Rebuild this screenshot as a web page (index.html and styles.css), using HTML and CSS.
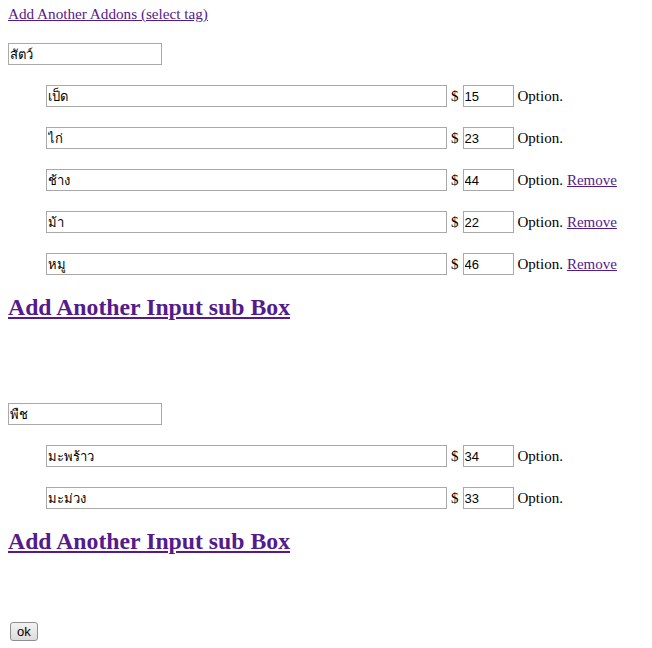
FILE: index.html
```html
<!DOCTYPE html>
<html lang="th">
<head>
  <meta charset="UTF-8" />
  <title>Addons</title>
  <link rel="stylesheet" href="styles.css">
</head>
<body>

<a href="#" class="add-tag">Add Another Addons (select tag)</a>

<form id="addons-form">
  <div class="group">
    <input type="text" class="tag-name" value="สัตว์">
    <div class="items">
      <div class="item">
        <input type="text" class="item-name" value="เป็ด">
        <span>$</span>
        <input type="text" class="item-price" value="15">
        <span>Option.</span>
      </div>
      <div class="item">
        <input type="text" class="item-name" value="ไก่">
        <span>$</span>
        <input type="text" class="item-price" value="23">
        <span>Option.</span>
      </div>
      <div class="item">
        <input type="text" class="item-name" value="ช้าง">
        <span>$</span>
        <input type="text" class="item-price" value="44">
        <span>Option.</span>
        <a href="#" class="remove">Remove</a>
      </div>
      <div class="item">
        <input type="text" class="item-name" value="ม้า">
        <span>$</span>
        <input type="text" class="item-price" value="22">
        <span>Option.</span>
        <a href="#" class="remove">Remove</a>
      </div>
      <div class="item">
        <input type="text" class="item-name" value="หมู">
        <span>$</span>
        <input type="text" class="item-price" value="46">
        <span>Option.</span>
        <a href="#" class="remove">Remove</a>
      </div>
    </div>
    <h2><a href="#">Add Another Input sub Box</a></h2>
  </div>

  <div class="group">
    <input type="text" class="tag-name" value="พืช">
    <div class="items">
      <div class="item">
        <input type="text" class="item-name" value="มะพร้าว">
        <span>$</span>
        <input type="text" class="item-price" value="34">
        <span>Option.</span>
      </div>
      <div class="item">
        <input type="text" class="item-name" value="มะม่วง">
        <span>$</span>
        <input type="text" class="item-price" value="33">
        <span>Option.</span>
      </div>
    </div>
    <h2><a href="#">Add Another Input sub Box</a></h2>
  </div>

  <button type="submit" class="ok">ok</button>
</form>

</body>
</html>
```

FILE: styles.css
```css
body {
  margin: 5px 8px 8px;
  font-family: "Liberation Serif", "Times New Roman", serif;
  font-size: 15px;
  color: #000;
  background: #fff;
}
a {
  color: #551a8b;
}
.add-tag {
  display: block;
  line-height: 18px;
  font-size: 15.2px;
}
.group {
  display: flex;
  flex-direction: column;
  align-items: flex-start;
}
.group + .group .tag-name {
  margin-top: 82px;
}
input {
  box-sizing: border-box;
  height: 22px;
  padding: 0 1px;
  border: 1px solid #a9a9a9;
  font-family: Tahoma, "Liberation Sans", sans-serif;
  font-size: 13px;
  color: #000;
}
.tag-name {
  width: 154px;
  margin-top: 20px;
}
.items {
  padding-left: 38px;
}
.item {
  display: flex;
  align-items: center;
  gap: 4px;
  margin-top: 20px;
  line-height: 22px;
}
.item-name {
  width: 401px;
}
.item-price {
  width: 51px;
}
h2 {
  margin: 19px 0 0;
  font-size: 23.75px;
  line-height: 27px;
}
.ok {
  margin: 67px 0 0 2px;
  height: 19px;
  padding: 0 6px;
  font-family: Tahoma, "Liberation Sans", sans-serif;
  font-size: 13px;
  border: 1px solid #8e8f8f;
  border-radius: 3px;
  background: linear-gradient(#f2f2f2, #dcdcdc);
}
```
